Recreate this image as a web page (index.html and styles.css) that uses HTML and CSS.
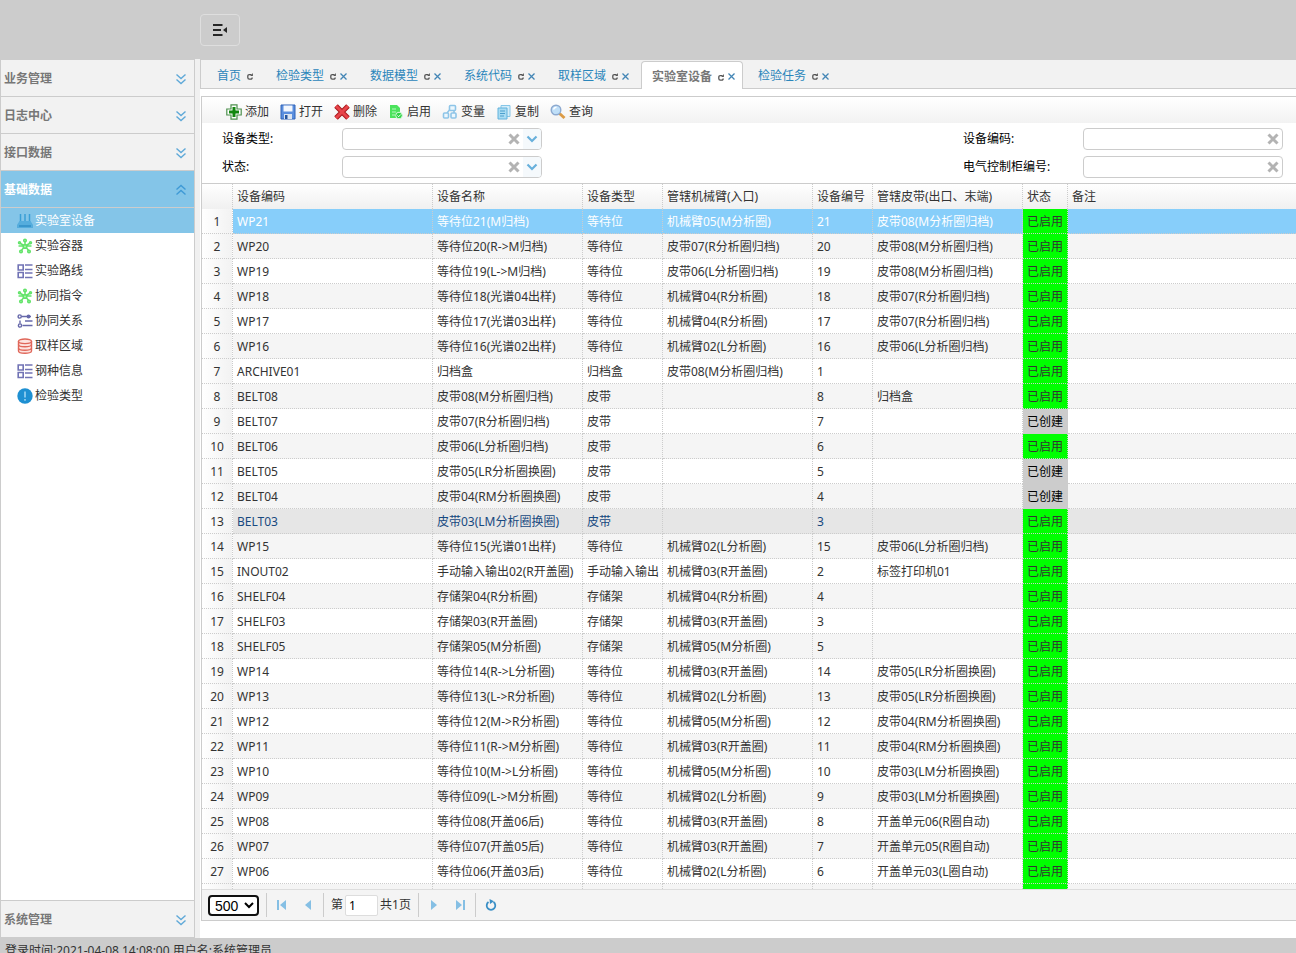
FILE: index.html
```html
<!DOCTYPE html>
<html lang="zh-CN">
<head>
<meta charset="utf-8">
<title>实验室设备</title>
<link rel="stylesheet" href="styles.css">
</head>
<body>
<svg class="sprite" aria-hidden="true">
  <symbol id="down" viewBox="0 0 12 12"><path d="M1.500 1.500 6 5.500l4.500-4M1.500 6.500l4.500 4 4.500-4" fill="none" stroke="currentColor" stroke-width="1.400"/></symbol>
  <symbol id="up" viewBox="0 0 12 12"><path d="M1.500 5.500 6 1.500l4.500 4M1.500 10.500l4.500-4 4.500 4" fill="none" stroke="currentColor" stroke-width="1.400"/></symbol>
  <symbol id="reload" viewBox="0 0 6 8"><path d="M4.500 2.700H2.300Q.8 2.700.8 4.200v1.300Q.8 7.100 2.300 7.100h1.400Q5.200 7.100 5.200 5.600" fill="none" stroke="#555" stroke-width="1.300"/><path d="M5.900 1v3H3.200z" fill="#555"/></symbol>
  <symbol id="close" viewBox="0 0 7 7"><path d="M.5.5l6 6M6.500.5l-6 6" stroke="#4285b5" stroke-width="1.300"/></symbol>
  <symbol id="clear" viewBox="0 0 12 12"><path d="M1.500 1.500l9 9M10.500 1.500l-9 9" stroke="#b3b3b3" stroke-width="3"/></symbol>
  <symbol id="arrow" viewBox="0 0 12 8"><path d="M1.500 1.500 6 6l4.500-4.500" fill="none" stroke="#68b0dc" stroke-width="2.200"/></symbol>
  <symbol id="flower" viewBox="0 0 16 16"><g stroke="#63e36a" stroke-width="1.500" fill="#a9f5ad"><path d="M8 8V2.500M8 8 2.500 5M8 8l5.500-3M8 8l-4 5M8 8l4 5M8 8H1.500M8 8h6.500"/><circle cx="8" cy="2.500" r="1.300"/><circle cx="2.500" cy="4.800" r="1"/><circle cx="13.500" cy="4.800" r="1"/><circle cx="4" cy="13.500" r="1.300"/><circle cx="12" cy="13.500" r="1.300"/><circle cx="8" cy="8.500" r="1.800"/></g></symbol>
  <symbol id="list" viewBox="0 0 16 16"><path d="M1.200 2h5v5h-5zM1.200 9.500h5v5h-5z" fill="none" stroke="#7173b5" stroke-width="1.600"/><path d="M8 2h7.500M8 6.500h7.500M8 10h7.500M8 14.500h7.500" stroke="#7173b5" stroke-width="1.300"/></symbol>
</svg>
<header class="topbar">
  <button class="menu-toggle" aria-label="折叠菜单"><svg width="16" height="14" viewBox="0 0 16 14"><path d="M1 2h9.500M1 7h8M1 12h9.500" stroke="#252525" stroke-width="2"/><path d="M11 7l4-3v6z" fill="#252525"/></svg></button>
</header>
<div class="workspace">
  <nav class="sidebar">
    <button class="group">业务管理<svg class="chevron"><use href="#down"/></svg></button>
    <button class="group">日志中心<svg class="chevron"><use href="#down"/></svg></button>
    <button class="group">接口数据<svg class="chevron"><use href="#down"/></svg></button>
    <button class="group open">基础数据<svg class="chevron"><use href="#up"/></svg></button>
    <div class="tree">
      <a class="node current" href="#"><svg viewBox="0 0 16 16"><path d="M3.500 1v8M8 1v8M12.500 1v8" stroke="#3a9fd5" stroke-width="1.500"/><path d="M2.500 8h11L16 12v3H0v-3z" fill="#55addd"/><path d="M2 13h12" stroke="#318fc6" stroke-width="1.500"/></svg>实验室设备</a>
      <a class="node" href="#"><svg><use href="#flower"/></svg>实验容器</a>
      <a class="node" href="#"><svg><use href="#list"/></svg>实验路线</a>
      <a class="node" href="#"><svg><use href="#flower"/></svg>协同指令</a>
      <a class="node" href="#"><svg viewBox="0 0 16 16"><g fill="none" stroke="#6668aa" stroke-width="1.400"><circle cx="2.700" cy="3.500" r="1.600"/><path d="M4.500 3.500H14M8 8h7.500M3 7.500v3M5.500 12.500h10"/><circle cx="3" cy="12.500" r="1.600"/><circle cx="11.500" cy="3.500" r="1.200" fill="#6668aa"/></g></svg>协同关系</a>
      <a class="node" href="#"><svg viewBox="0 0 16 16"><g fill="#fde4e0" stroke="#e0675a" stroke-width="1.400"><path d="M1.500 3v10c0 3 13 3 13 0V3"/><ellipse cx="8" cy="3.300" rx="6.500" ry="2.300"/><path d="M1.500 6.500c0 3 13 3 13 0M1.500 10c0 3 13 3 13 0" fill="none"/></g></svg>取样区域</a>
      <a class="node" href="#"><svg><use href="#list"/></svg>钢种信息</a>
      <a class="node" href="#"><svg viewBox="0 0 16 16"><circle cx="8" cy="8" r="7.700" fill="#1e90d2"/><path d="M8 3.500v6M8 11v1.700" stroke="#9bd4f3" stroke-width="1.600"/></svg>检验类型</a>
    </div>
    <button class="group last">系统管理<svg class="chevron"><use href="#down"/></svg></button>
  </nav>
  <main class="center">
    <div class="tabs">
      <a class="tab" href="#">首页<svg class="re"><use href="#reload"/></svg></a>
      <a class="tab" href="#">检验类型<svg class="re"><use href="#reload"/></svg><svg class="cl"><use href="#close"/></svg></a>
      <a class="tab" href="#">数据模型<svg class="re"><use href="#reload"/></svg><svg class="cl"><use href="#close"/></svg></a>
      <a class="tab" href="#">系统代码<svg class="re"><use href="#reload"/></svg><svg class="cl"><use href="#close"/></svg></a>
      <a class="tab" href="#">取样区域<svg class="re"><use href="#reload"/></svg><svg class="cl"><use href="#close"/></svg></a>
      <a class="tab active" href="#">实验室设备<svg class="re"><use href="#reload"/></svg><svg class="cl"><use href="#close"/></svg></a>
      <a class="tab" href="#">检验任务<svg class="re"><use href="#reload"/></svg><svg class="cl"><use href="#close"/></svg></a>
    </div>
    <section class="panel">
      <div class="toolbar">
        <button><svg viewBox="0 0 16 16"><path d="M5 .8h6V5h4.200v6H11v4.200H5V11H.8V5H5z" fill="#fff" stroke="#4d8f4d" stroke-width="1.200"/><path d="M6.500 3h3v3.500H13v3H9.500V13h-3V9.500H3v-3h3.500z" fill="#12870f"/></svg>添加</button>
        <button><svg viewBox="0 0 16 16"><path d="M1 1h14v14H1z" fill="#5a8ede" stroke="#2f62b8"/><path d="M3.500 1.500h9v6h-9z" fill="#f3f7fd"/><path d="M4 10h8v5H4z" fill="#dbe4f0"/><path d="M5 11h2.500v4H5z" fill="#24549f"/></svg>打开</button>
        <button><svg viewBox="0 0 16 16"><path d="M2 2 14 14M14 2 2 14" stroke="#a8191c" stroke-width="5"/><path d="M2 2 14 14M14 2 2 14" stroke="#e8444a" stroke-width="3"/></svg>删除</button>
        <button><svg viewBox="0 0 16 16"><path d="M2 1h7l3 3v10H2z" fill="#4be35c"/><path d="M4 5h4M4 8h4M4 11h3" stroke="#b8f7be"/><circle cx="11" cy="11.500" r="3.300" fill="#2fd345" stroke="#d8fadb"/><path d="M9.500 11.500l1.200 1.200 2-2.200" fill="none" stroke="#fff"/></svg>启用</button>
        <button><svg viewBox="0 0 16 16"><g fill="#edf7fd" stroke="#8ec5e8" stroke-width="1.600"><path d="M7.500 6 5 9M12 6v4"/><rect x="7.500" y="1.500" width="6" height="5" rx="1"/><rect x="1.500" y="9" width="5" height="5" rx="1"/><rect x="9" y="9" width="5" height="5" rx="1"/></g></svg>变量</button>
        <button><svg viewBox="0 0 16 16"><path d="M5 1.500h9v11H5z" fill="#d5edf9" stroke="#85c6e8"/><path d="M2 4h9v11H2z" fill="#a9dcf3" stroke="#62b2dc"/><path d="M4 7h5M4 9.500h5M4 12h4" stroke="#4c9fcd"/></svg>复制</button>
        <button><svg viewBox="0 0 16 16"><path d="M9.500 9.500l5 4.500" stroke="#dc9b45" stroke-width="3"/><circle cx="6" cy="6" r="4.800" fill="#bfdff8" stroke="#8da9cf" stroke-width="1.400"/><path d="M3.500 5.500Q4 3.500 6.500 3.300" stroke="#fff" stroke-width="1.400" fill="none"/></svg>查询</button>
      </div>
      <form class="filters">
        <div class="column">
          <div class="field"><label for="kind">设备类型:</label><span class="box"><input id="kind" type="text"><button type="button" aria-label="清除"><svg class="x"><use href="#clear"/></svg></button><button type="button" class="drop" aria-label="展开"><svg class="v"><use href="#arrow"/></svg></button></span></div>
          <div class="field"><label for="state">状态:</label><span class="box"><input id="state" type="text"><button type="button" aria-label="清除"><svg class="x"><use href="#clear"/></svg></button><button type="button" class="drop" aria-label="展开"><svg class="v"><use href="#arrow"/></svg></button></span></div>
        </div>
        <div class="column">
          <div class="field"><label for="code">设备编码:</label><span class="box"><input id="code" type="text"><button type="button" aria-label="清除"><svg class="x"><use href="#clear"/></svg></button></span></div>
          <div class="field"><label for="cabinet">电气控制柜编号:</label><span class="box"><input id="cabinet" type="text"><button type="button" aria-label="清除"><svg class="x"><use href="#clear"/></svg></button></span></div>
        </div>
      </form>
      <div class="grid">
        <table>
          <colgroup><col class="w-num"><col class="w-code"><col class="w-name"><col class="w-kind"><col class="w-arm"><col class="w-no"><col class="w-belt"><col class="w-state"><col></colgroup>
          <thead><tr><th></th><th>设备编码</th><th>设备名称</th><th>设备类型</th><th>管辖机械臂(入口)</th><th>设备编号</th><th>管辖皮带(出口、末端)</th><th>状态</th><th>备注</th></tr></thead>
          <tbody>
            <tr class="selected"><td>1</td><td>WP21</td><td>等待位21(M归档)</td><td>等待位</td><td>机械臂05(M分析圈)</td><td>21</td><td>皮带08(M分析圈归档)</td><td class="on">已启用</td><td></td></tr>
            <tr><td>2</td><td>WP20</td><td>等待位20(R-&gt;M归档)</td><td>等待位</td><td>皮带07(R分析圈归档)</td><td>20</td><td>皮带08(M分析圈归档)</td><td class="on">已启用</td><td></td></tr>
            <tr><td>3</td><td>WP19</td><td>等待位19(L-&gt;M归档)</td><td>等待位</td><td>皮带06(L分析圈归档)</td><td>19</td><td>皮带08(M分析圈归档)</td><td class="on">已启用</td><td></td></tr>
            <tr><td>4</td><td>WP18</td><td>等待位18(光谱04出样)</td><td>等待位</td><td>机械臂04(R分析圈)</td><td>18</td><td>皮带07(R分析圈归档)</td><td class="on">已启用</td><td></td></tr>
            <tr><td>5</td><td>WP17</td><td>等待位17(光谱03出样)</td><td>等待位</td><td>机械臂04(R分析圈)</td><td>17</td><td>皮带07(R分析圈归档)</td><td class="on">已启用</td><td></td></tr>
            <tr><td>6</td><td>WP16</td><td>等待位16(光谱02出样)</td><td>等待位</td><td>机械臂02(L分析圈)</td><td>16</td><td>皮带06(L分析圈归档)</td><td class="on">已启用</td><td></td></tr>
            <tr><td>7</td><td>ARCHIVE01</td><td>归档盒</td><td>归档盒</td><td>皮带08(M分析圈归档)</td><td>1</td><td></td><td class="on">已启用</td><td></td></tr>
            <tr><td>8</td><td>BELT08</td><td>皮带08(M分析圈归档)</td><td>皮带</td><td></td><td>8</td><td>归档盒</td><td class="on">已启用</td><td></td></tr>
            <tr><td>9</td><td>BELT07</td><td>皮带07(R分析圈归档)</td><td>皮带</td><td></td><td>7</td><td></td><td class="made">已创建</td><td></td></tr>
            <tr><td>10</td><td>BELT06</td><td>皮带06(L分析圈归档)</td><td>皮带</td><td></td><td>6</td><td></td><td class="on">已启用</td><td></td></tr>
            <tr><td>11</td><td>BELT05</td><td>皮带05(LR分析圈换圈)</td><td>皮带</td><td></td><td>5</td><td></td><td class="made">已创建</td><td></td></tr>
            <tr><td>12</td><td>BELT04</td><td>皮带04(RM分析圈换圈)</td><td>皮带</td><td></td><td>4</td><td></td><td class="made">已创建</td><td></td></tr>
            <tr class="hovered"><td>13</td><td>BELT03</td><td>皮带03(LM分析圈换圈)</td><td>皮带</td><td></td><td>3</td><td></td><td class="on">已启用</td><td></td></tr>
            <tr><td>14</td><td>WP15</td><td>等待位15(光谱01出样)</td><td>等待位</td><td>机械臂02(L分析圈)</td><td>15</td><td>皮带06(L分析圈归档)</td><td class="on">已启用</td><td></td></tr>
            <tr><td>15</td><td>INOUT02</td><td>手动输入输出02(R开盖圈)</td><td>手动输入输出</td><td>机械臂03(R开盖圈)</td><td>2</td><td>标签打印机01</td><td class="on">已启用</td><td></td></tr>
            <tr><td>16</td><td>SHELF04</td><td>存储架04(R分析圈)</td><td>存储架</td><td>机械臂04(R分析圈)</td><td>4</td><td></td><td class="on">已启用</td><td></td></tr>
            <tr><td>17</td><td>SHELF03</td><td>存储架03(R开盖圈)</td><td>存储架</td><td>机械臂03(R开盖圈)</td><td>3</td><td></td><td class="on">已启用</td><td></td></tr>
            <tr><td>18</td><td>SHELF05</td><td>存储架05(M分析圈)</td><td>存储架</td><td>机械臂05(M分析圈)</td><td>5</td><td></td><td class="on">已启用</td><td></td></tr>
            <tr><td>19</td><td>WP14</td><td>等待位14(R-&gt;L分析圈)</td><td>等待位</td><td>机械臂03(R开盖圈)</td><td>14</td><td>皮带05(LR分析圈换圈)</td><td class="on">已启用</td><td></td></tr>
            <tr><td>20</td><td>WP13</td><td>等待位13(L-&gt;R分析圈)</td><td>等待位</td><td>机械臂02(L分析圈)</td><td>13</td><td>皮带05(LR分析圈换圈)</td><td class="on">已启用</td><td></td></tr>
            <tr><td>21</td><td>WP12</td><td>等待位12(M-&gt;R分析圈)</td><td>等待位</td><td>机械臂05(M分析圈)</td><td>12</td><td>皮带04(RM分析圈换圈)</td><td class="on">已启用</td><td></td></tr>
            <tr><td>22</td><td>WP11</td><td>等待位11(R-&gt;M分析圈)</td><td>等待位</td><td>机械臂03(R开盖圈)</td><td>11</td><td>皮带04(RM分析圈换圈)</td><td class="on">已启用</td><td></td></tr>
            <tr><td>23</td><td>WP10</td><td>等待位10(M-&gt;L分析圈)</td><td>等待位</td><td>机械臂05(M分析圈)</td><td>10</td><td>皮带03(LM分析圈换圈)</td><td class="on">已启用</td><td></td></tr>
            <tr><td>24</td><td>WP09</td><td>等待位09(L-&gt;M分析圈)</td><td>等待位</td><td>机械臂02(L分析圈)</td><td>9</td><td>皮带03(LM分析圈换圈)</td><td class="on">已启用</td><td></td></tr>
            <tr><td>25</td><td>WP08</td><td>等待位08(开盖06后)</td><td>等待位</td><td>机械臂03(R开盖圈)</td><td>8</td><td>开盖单元06(R圈自动)</td><td class="on">已启用</td><td></td></tr>
            <tr><td>26</td><td>WP07</td><td>等待位07(开盖05后)</td><td>等待位</td><td>机械臂03(R开盖圈)</td><td>7</td><td>开盖单元05(R圈自动)</td><td class="on">已启用</td><td></td></tr>
            <tr><td>27</td><td>WP06</td><td>等待位06(开盖03后)</td><td>等待位</td><td>机械臂02(L分析圈)</td><td>6</td><td>开盖单元03(L圈自动)</td><td class="on">已启用</td><td></td></tr>
            <tr><td></td><td></td><td></td><td></td><td></td><td></td><td></td><td class="on"></td><td></td></tr>
          </tbody>
        </table>
      </div>
      <div class="pager">
        <select aria-label="每页条数"><option>500</option></select>
        <i class="sep"></i>
        <button aria-label="首页"><svg viewBox="0 0 12 12"><path d="M1 1h2v10H1zM10 1v10L4 6z" fill="#85bfe4"/></svg></button>
        <button aria-label="上一页"><svg viewBox="0 0 12 12"><path d="M9 1v10L3 6z" fill="#85bfe4"/></svg></button>
        <i class="sep"></i>
        <label for="page">第</label><input id="page" type="text" value="1"><span>共1页</span>
        <i class="sep"></i>
        <button aria-label="下一页"><svg viewBox="0 0 12 12"><path d="M3 1v10l6-5z" fill="#85bfe4"/></svg></button>
        <button aria-label="末页"><svg viewBox="0 0 12 12"><path d="M9 1h2v10H9zM2 1v10l6-5z" fill="#85bfe4"/></svg></button>
        <i class="sep"></i>
        <button aria-label="刷新"><svg viewBox="0 0 12 12"><path d="M3.500 3A4.300 4.300 0 1 0 8.500 3" fill="none" stroke="#3a8fc6" stroke-width="1.800"/><path d="M4.500 0l4.500 2.200L5 5z" fill="#3a8fc6"/></svg></button>
      </div>
    </section>
  </main>
</div>
<footer class="status">登录时间:2021-04-08 14:08:00 用户名:系统管理员</footer>
</body>
</html>
```
FILE: styles.css
```css
* { box-sizing: border-box; }
body {
  margin: 0;
  height: 100vh;
  display: flex;
  flex-direction: column;
  overflow: hidden;
  background: #fff;
  color: #333;
  font: 12px/16px "Noto Sans", "Noto Sans CJK SC", sans-serif;
}
button, input, select { font: inherit; color: inherit; }
button { border: 0; background: none; padding: 0; cursor: pointer; }
a { color: inherit; text-decoration: none; }
svg { flex: none; }
.sprite { display: none; }

.topbar { flex: none; height: 59px; padding: 14px 0 0 200px; background: #ccc; }
.menu-toggle {
  display: grid;
  place-items: center;
  width: 40px;
  height: 32px;
  border: 1px solid #dedede;
  border-radius: 4px;
}
.workspace { flex: 1; min-height: 0; display: flex; gap: 5px; background: #f0f0f0; }

.sidebar {
  flex: none;
  width: 195px;
  display: flex;
  flex-direction: column;
  border: 1px solid #ccc;
  background: #fff;
}
.group {
  flex: none;
  display: flex;
  align-items: center;
  justify-content: space-between;
  height: 37px;
  padding: 2px 7px 0 3px;
  border-bottom: 1px solid #ccc;
  background: #f2f2f2;
  color: #777;
  font-weight: bold;
}
.group.open { background: #84c5e8; color: #fff; }
.group.last { border-top: 1px solid #ccc; border-bottom: 0; }
.chevron { width: 12px; height: 12px; color: #5fa9d8; }
.open .chevron { color: #3f9ad6; }
.tree { flex: 1; }
.node { display: flex; align-items: center; gap: 2px; height: 25px; padding-left: 16px; }
.node svg { width: 16px; height: 16px; }
.node.current { background: #84c5e8; color: #fff; }

.center { flex: 1; min-width: 0; display: flex; flex-direction: column; padding-bottom: 17px; background: #fff; }
.tabs {
  flex: none;
  display: flex;
  align-items: flex-end;
  gap: 4px;
  height: 30px;
  padding-left: 5px;
  border: solid #ccc;
  border-width: 1px 0 1px 1px;
  background: #f2f2f2;
}
.tab {
  display: flex;
  align-items: center;
  height: 27px;
  padding: 2px 7px 0 10px;
  border: 1px solid transparent;
  border-bottom: 0;
  color: #2b86bb;
}
.tab.active {
  margin-bottom: -1px;
  height: 28px;
  border-color: #ccc;
  border-radius: 4px 4px 0 0;
  background: #fff;
  color: #777;
  font-weight: bold;
}
.re { width: 6px; height: 8px; margin-left: 6px; }
.cl { width: 7px; height: 7px; margin-left: 4px; }

.panel {
  flex: 1;
  min-height: 0;
  display: flex;
  flex-direction: column;
  margin: 7px 0 0 1px;
  border: solid #ccc;
  border-width: 1px 0 1px 1px;
}
.toolbar {
  flex: none;
  display: flex;
  gap: 11px;
  height: 26px;
  padding-left: 24px;
  padding-top: 3px;
  background: linear-gradient(#fff, #f2f2f2);
}
.toolbar button { display: flex; align-items: center; gap: 3px; }
.toolbar svg { width: 16px; height: 16px; }

.filters { flex: none; display: flex; justify-content: space-between; height: 60px; padding: 5px 13px 0 20px; color: #000; }
.column { display: flex; flex-direction: column; gap: 6px; }
.field { display: flex; align-items: center; height: 22px; }
.field label { width: 120px; }
.box { display: flex; width: 200px; height: 22px; border: 1px solid #ccc; border-radius: 4px; overflow: hidden; background: #fff; }
.box input { flex: 1; min-width: 0; border: 0; padding: 0 4px; outline: 0; background: none; }
.box button { display: grid; place-items: center; width: 18px; }
.box .drop { background: #f5f9fc; }
.x { width: 12px; height: 12px; }
.v { width: 12px; height: 8px; }

.grid { flex: 1; min-height: 0; overflow: hidden; border-top: 1px solid #ccc; }
table { width: 100%; table-layout: fixed; border-collapse: separate; border-spacing: 0; }
.w-num { width: 31px; }
.w-code { width: 200px; }
.w-name, .w-arm, .w-belt { width: 150px; }
.w-kind { width: 80px; }
.w-no { width: 60px; }
.w-state { width: 45px; }
th, td {
  height: 25px;
  padding: 2px 0 0 4px;
  border: dotted #ccc;
  border-width: 0 1px 1px 0;
  text-align: left;
  font-weight: normal;
  white-space: nowrap;
  overflow: hidden;
}
th:last-child, td:last-child { border-right: 0; }
th { padding-top: 0; background: linear-gradient(#fff, #f0f0f0); border-bottom: 0; }
tbody tr:nth-child(even) { background: #f5f5f5; }
tbody .selected { background: #87cefa; color: #fff; }
tbody .hovered { background: #e6e6e6; color: #17497f; }
td:first-child { padding-left: 0; text-align: center; color: #333; background: linear-gradient(90deg, #fff, #f2f2f2); }
.on { background: #0f0; color: #333; }
.made { background: #ccc; color: #000; }

.pager { flex: none; display: flex; align-items: center; height: 31px; padding-left: 6px; border-top: 1px solid #ddd; background: #f4f4f4; }
.pager select { width: 51px; height: 21px; padding: 0 0 0 1px; border: 2px solid #101010; border-radius: 4px; background: #fff; color: #000; font: 14px/16px "Liberation Sans", sans-serif; }
.sep { width: 1px; height: 24px; margin: 0 7px; background: #ccc; }
.pager button { display: grid; place-items: center; width: 16px; height: 24px; }
.pager button + button { margin-left: 10px; }
.pager svg { width: 12px; height: 12px; }
.pager input { width: 33px; height: 21px; margin: 0 2px; padding: 0 3px; border: 1px solid #ddd; border-radius: 2px; background: #fff; color: #000; }
.status { flex: none; height: 15px; padding: 5px 5px 0; overflow: hidden; background: #ccc; white-space: nowrap; }
```
